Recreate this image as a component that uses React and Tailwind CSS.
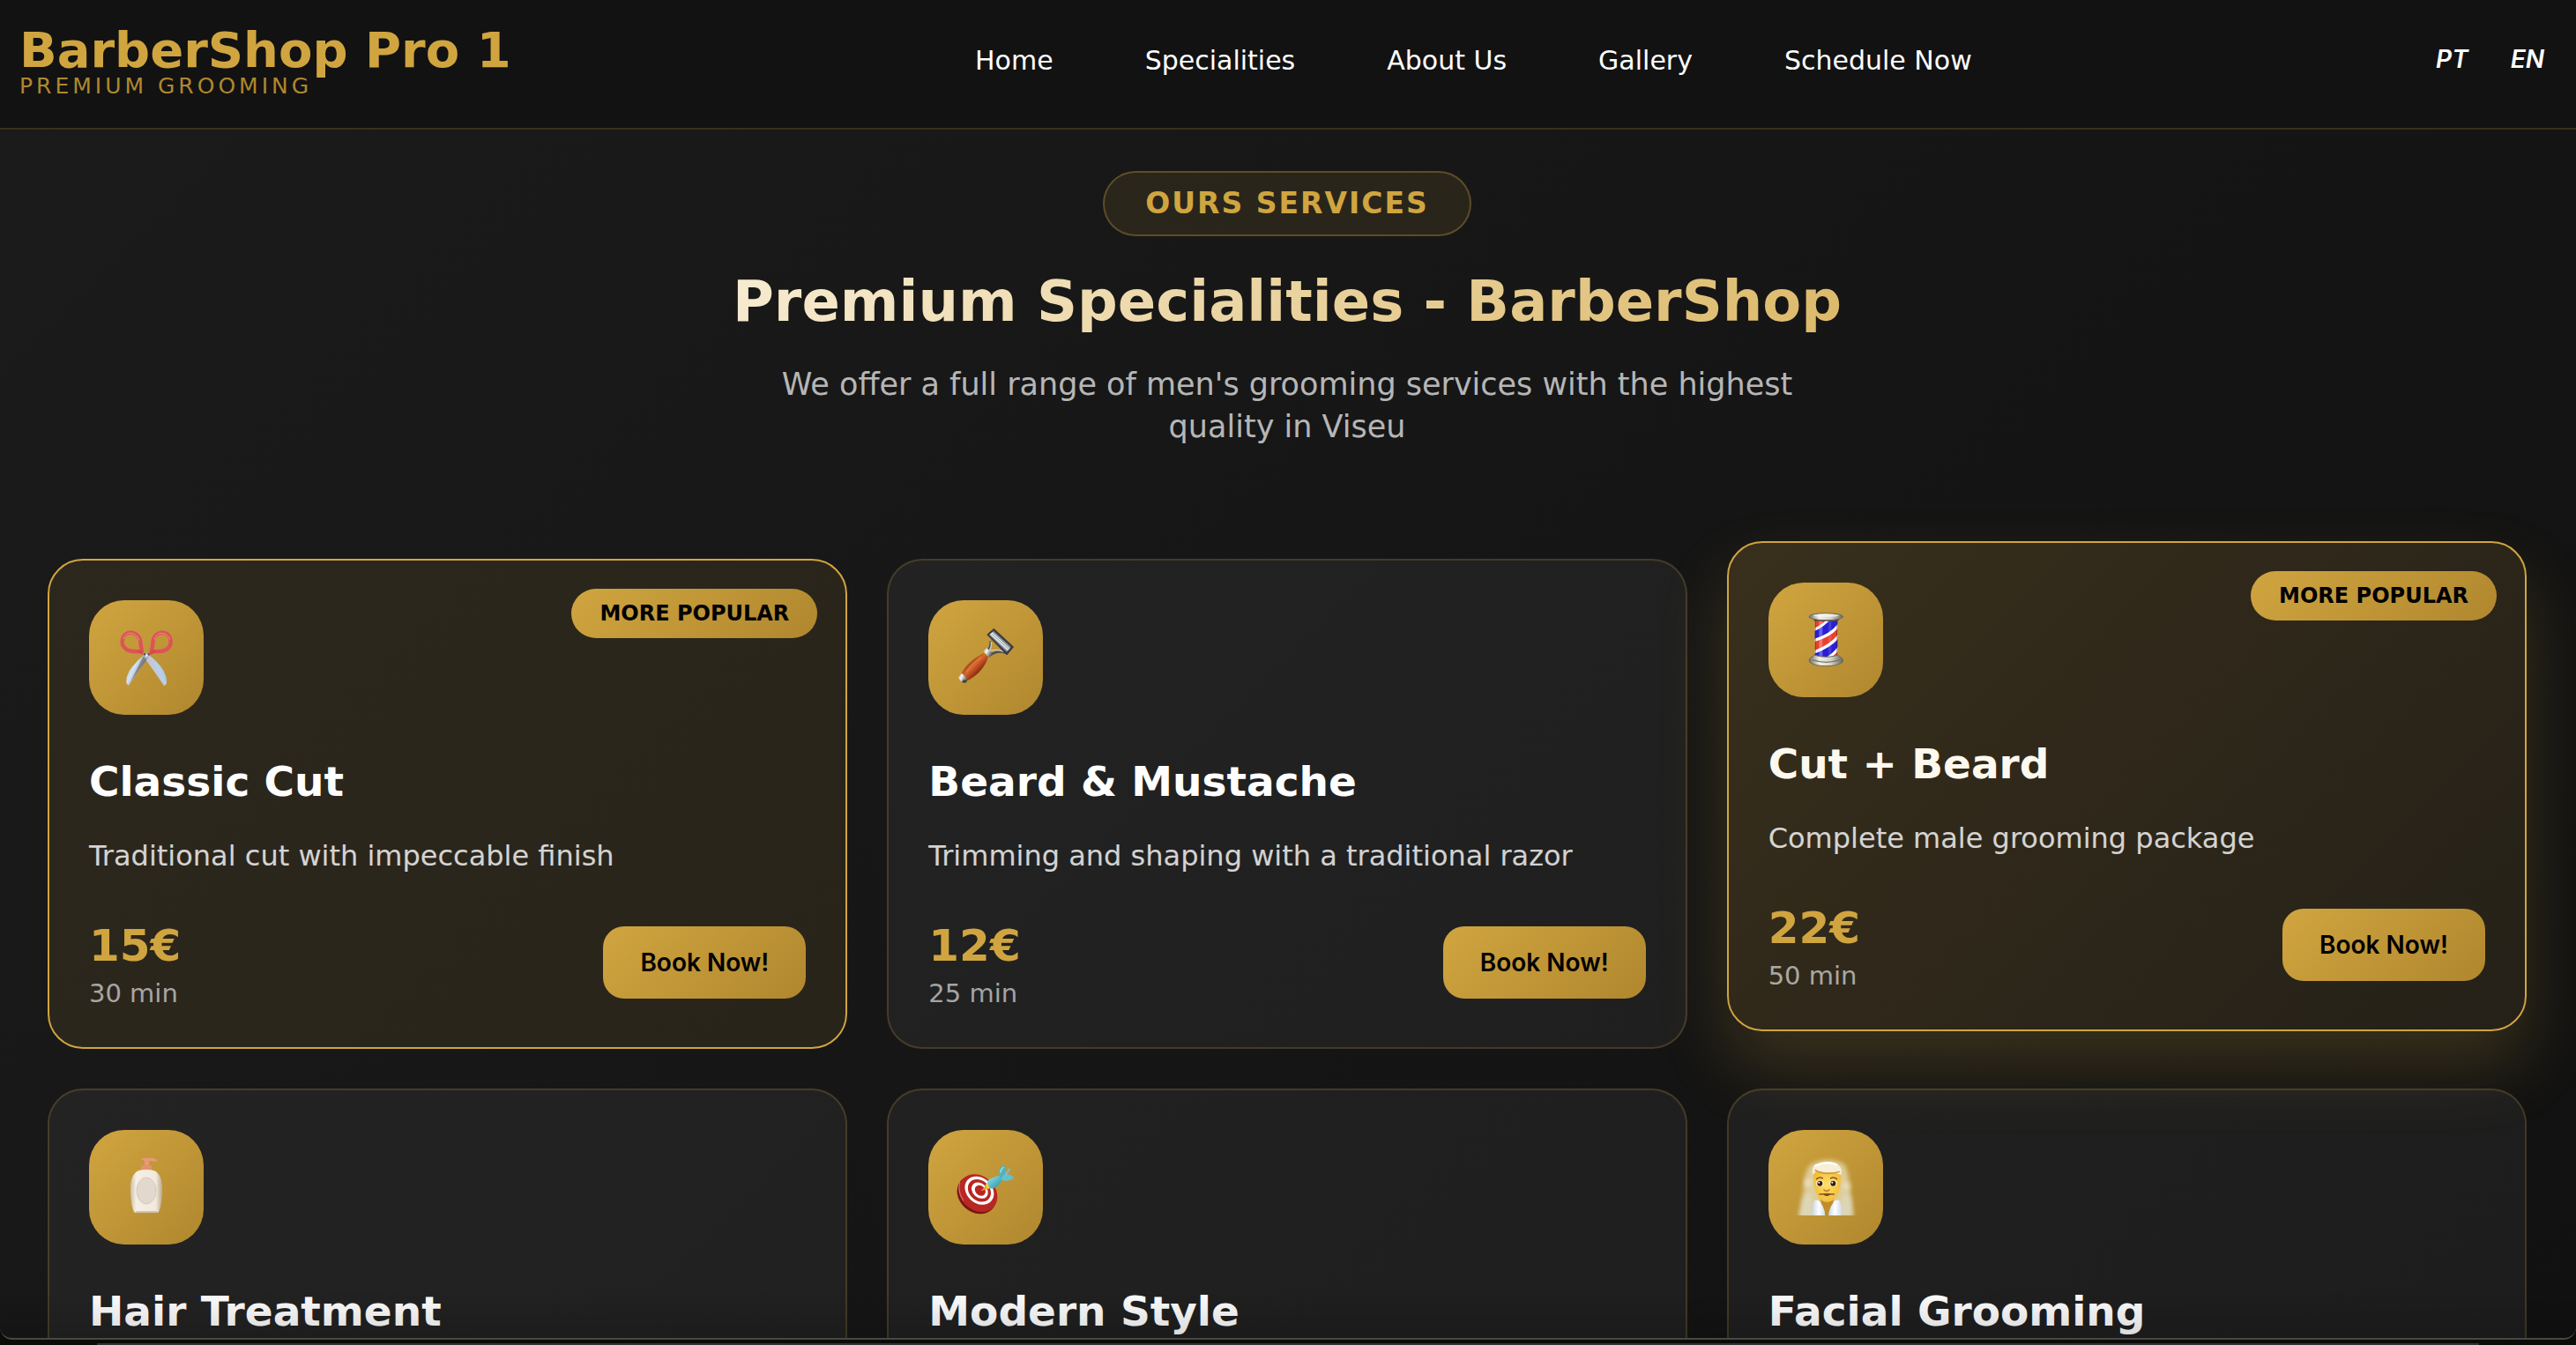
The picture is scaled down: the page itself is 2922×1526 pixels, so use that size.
const NAV = ["Home", "Specialities", "About Us", "Gallery", "Schedule Now"];

function ScissorsIcon() {
  return (
    <svg viewBox="33 33 390 390" className="size-full" aria-hidden="true">
      <defs>
        <linearGradient id="bladeL" x1="0" y1="0" x2="1" y2="0.7">
          <stop offset="0" stopColor="#9fb0c4" />
          <stop offset="0.45" stopColor="#d3e3f3" />
          <stop offset="0.7" stopColor="#8d8f98" />
          <stop offset="1" stopColor="#5d4b43" />
        </linearGradient>
        <linearGradient id="bladeR" x1="1" y1="0" x2="0" y2="0.6">
          <stop offset="0" stopColor="#8fa9c8" />
          <stop offset="0.45" stopColor="#b9d0ea" />
          <stop offset="0.75" stopColor="#c9c3c9" />
          <stop offset="1" stopColor="#8d6b62" />
        </linearGradient>
      </defs>
      <path d="M224 216 L236 228 Q204 268 167 324 L160 314 Q158 288 178 262 Q196 238 224 216Z" fill="url(#bladeL)" />
      <path d="M232 216 L222 230 Q250 268 289 325 L297 316 Q299 290 281 264 Q262 238 232 216Z" fill="url(#bladeR)" />
      <path d="M217 224 L236 226 L176 308Z" fill="#4c4a50" opacity="0.45" />
      <g fill="none" stroke="#de5258" strokeWidth="13" strokeLinejoin="round">
        <path d="M146 172 C148 150 162 142 178 143 C196 146 209 160 209 184 L213 208 L184 207 C162 206 144 192 146 172Z" />
        <path d="M311 172 C309 150 295 142 279 143 C262 146 249 160 250 184 L245 208 L274 207 C296 206 313 192 311 172Z" />
      </g>
      <path d="M204 200 L224 214 L214 218 L196 208Z M255 200 L234 214 L244 218 L262 208Z" fill="#d8484f" />
      <g fill="none" stroke="#f28d8d" strokeWidth="3" strokeLinecap="round">
        <path d="M150 164 C153 150 166 143 178 145 C190 147 199 155 204 168" />
        <path d="M256 166 C260 152 269 145 280 145 C294 146 305 154 308 166" />
      </g>
      <path d="M215 212 H241 L235 228 L228 233 L221 228Z" fill="#a9b6c4" />
      <circle cx="222" cy="217" r="4" fill="#5a5058" />
      <circle cx="236" cy="217" r="4" fill="#5a5058" />
      <circle cx="229" cy="221" r="4" fill="#eef5fb" />
    </svg>
  );
}

function RazorIcon() {
  return (
    <svg viewBox="39 33 390 390" className="size-full" aria-hidden="true">
      <defs>
        <linearGradient id="handle" x1="0.3" y1="0.3" x2="0.7" y2="0.7">
          <stop offset="0" stopColor="#98401a" />
          <stop offset="0.4" stopColor="#d9682c" />
          <stop offset="1" stopColor="#86200f" />
        </linearGradient>
        <linearGradient id="steel" x1="0" y1="0" x2="1" y2="0.5">
          <stop offset="0" stopColor="#8b8f92" />
          <stop offset="0.4" stopColor="#f5f7f8" />
          <stop offset="1" stopColor="#4b4b4d" />
        </linearGradient>
      </defs>
      <path d="M251 172 Q252 198 236 208 L250 220 Q274 202 301 212" fill="none" stroke="#4d4f50" strokeWidth="7" />
      <path d="M253 174 Q256 196 242 208 Q268 196 296 208" fill="none" stroke="#c9cccb" strokeWidth="4" />
      <path d="M239 150 L262 130 L329 192 L306 219Z" fill="#3b3e42" stroke="#2d2f33" strokeWidth="2" strokeLinejoin="round" />
      <path d="M246 151 L261 138 L320 192 L306 209Z" fill="#8f989f" />
      <path d="M249 149 L257 142 L316 197 L309 204Z" fill="#e7edf1" />
      <path d="M256 148 L312 199" stroke="#8c959d" strokeWidth="3" />
      <path d="M226 206 L237 196 L259 214 L247 228Z" fill="url(#steel)" />
      <path d="M151 284 C162 258 190 232 227 213 L243 226 C232 262 206 288 176 305Z" fill="url(#handle)" />
      <path d="M170 276 Q188 248 218 228" fill="none" stroke="#ee8c4c" strokeWidth="4" strokeLinecap="round" opacity="0.7" />
      <path d="M141 296 L152 281 L175 303 L165 314 L153 313Z" fill="url(#steel)" />
      <path d="M152 312 L166 314 L171 308 L160 303Z" fill="#4b3f30" />
    </svg>
  );
}

function PoleIcon() {
  return (
    <svg viewBox="30 33 390 390" className="size-full" aria-hidden="true">
      <defs>
        <clipPath id="tube"><rect x="188" y="158" width="77" height="134" /></clipPath>
        <linearGradient id="cap" x1="0" y1="0" x2="1" y2="0">
          <stop offset="0" stopColor="#6f6c63" />
          <stop offset="0.3" stopColor="#f3f1e6" />
          <stop offset="0.65" stopColor="#d5d2c6" />
          <stop offset="1" stopColor="#67645b" />
        </linearGradient>
      </defs>
      <g clipPath="url(#tube)">
        <rect x="188" y="158" width="77" height="134" fill="#e8402f" />
        <path d="M180 196 Q216 182 240 152 H275 V170 Q246 214 180 231Z" fill="#2a1fd6" />
        <path d="M180 272 Q246 250 275 207 V250 Q250 282 220 296 H180Z" fill="#2a1fd6" />
        <path d="M180 196 Q216 182 240 152" fill="none" stroke="#fff" strokeWidth="9" />
        <path d="M180 231 Q246 214 275 170" fill="none" stroke="#fff" strokeWidth="10" />
        <path d="M180 272 Q246 250 275 207" fill="none" stroke="#fff" strokeWidth="10" />
        <path d="M220 296 Q250 282 272 252" fill="none" stroke="#fff" strokeWidth="10" />
        <rect x="202" y="158" width="12" height="134" fill="#fff" opacity="0.3" />
        <rect x="234" y="158" width="10" height="134" fill="#fff" opacity="0.12" />
        <rect x="188" y="158" width="4" height="134" fill="#401020" opacity="0.35" />
        <rect x="261" y="158" width="4" height="134" fill="#401020" opacity="0.35" />
      </g>
      <path d="M178 154 H275 L266 164 H187Z" fill="#4f4c44" />
      <ellipse cx="226" cy="149" rx="58" ry="12" fill="url(#cap)" stroke="#6b6860" strokeWidth="3" />
      <ellipse cx="226" cy="145" rx="44" ry="5" fill="#fbfaf2" opacity="0.7" />
      <path d="M188 280 Q226 292 265 280 L280 290 Q286 296 282 304 Q264 317 226 317 Q188 317 170 304 Q166 296 172 290Z" fill="url(#cap)" stroke="#6b6860" strokeWidth="3" />
      <path d="M180 296 Q226 312 273 296" fill="none" stroke="#77746b" strokeWidth="4" />
    </svg>
  );
}

function LotionIcon() {
  return (
    <svg viewBox="0 0 130 130" className="size-full" aria-hidden="true">
      <defs>
        <linearGradient id="bottle" x1="0" y1="0" x2="1" y2="0">
          <stop offset="0" stopColor="#c9bda6" />
          <stop offset="0.18" stopColor="#f6efe3" />
          <stop offset="0.8" stopColor="#f1e9dc" />
          <stop offset="1" stopColor="#b9a98c" />
        </linearGradient>
      </defs>
      <path d="M59 33 Q62 31 67 32 L73 32 Q77 33 77 36 L68 35 V41 H63 V35Z" fill="#e79a78" />
      <rect x="59" y="40" width="12" height="7" rx="1" fill="#e58f6c" />
      <path d="M53 48 Q56 45 65 45 Q74 45 77 48 Q84 54 83 71 Q82 88 79 93 Q78 94 76 94 H54 Q52 94 51 93 Q48 88 47 71 Q46 54 53 48Z" fill="url(#bottle)" />
      <ellipse cx="65" cy="69" rx="11" ry="15" fill="#e3d8ce" stroke="#d6c9bc" strokeWidth="1" />
      <path d="M53 93 H77" stroke="#a9987c" strokeWidth="1" />
    </svg>
  );
}

function TargetIcon() {
  return (
    <svg viewBox="39 36 390 390" className="size-full" aria-hidden="true">
      <defs>
        <linearGradient id="dart" x1="0" y1="0" x2="1" y2="1">
          <stop offset="0" stopColor="#a6e6ee" />
          <stop offset="0.5" stopColor="#58bccb" />
          <stop offset="1" stopColor="#2f8494" />
        </linearGradient>
      </defs>
      <g transform="rotate(42 206 254)">
        <ellipse cx="206" cy="258" rx="72" ry="59" fill="#7c1512" />
        <ellipse cx="206" cy="250" rx="71" ry="58" fill="#b82723" />
      </g>
      <g transform="rotate(42 208 246)">
        <ellipse cx="209" cy="240" rx="54" ry="43" fill="#fff" />
        <ellipse cx="209" cy="240" rx="43" ry="34" fill="#b92622" />
        <ellipse cx="210" cy="239" rx="31" ry="24" fill="#fff" />
        <ellipse cx="211" cy="238" rx="20" ry="16" fill="#b92622" />
      </g>
      <path d="M146 214 Q138 246 158 276" fill="none" stroke="#e27a74" strokeWidth="4" strokeLinecap="round" opacity="0.8" />
      <path d="M218 244 L238 222 L250 234Z" fill="#e0a92b" />
      <path d="M233 222 L244 214 L254 230 L240 237Z" fill="#f3cf3c" />
      <path d="M240 216 Q240 206 252 202 Q268 194 284 190 L291 203 Q284 220 270 230 Q258 238 248 234Z" fill="url(#dart)" />
      <path d="M280 194 Q272 166 297 156 Q308 166 302 190 L290 204Z" fill="#4fb3c2" />
      <path d="M286 202 L302 188 Q326 186 330 202 Q312 212 292 208Z" fill="#5dc3d1" />
      <path d="M290 200 L314 166 L319 170 L302 196Z" fill="#8cb7be" />
      <path d="M284 182 Q286 168 296 162" fill="none" stroke="#9fdfe8" strokeWidth="4" />
    </svg>
  );
}

function SaunaIcon() {
  return (
    <svg viewBox="30 36 390 390" className="size-full" aria-hidden="true">
      <defs>
        <filter id="steam" x="-20%" y="-20%" width="140%" height="140%"><feGaussianBlur stdDeviation="8" /></filter>
        <clipPath id="bust"><rect x="120" y="120" width="220" height="207" /></clipPath>
        <radialGradient id="face" cx="0.5" cy="0.5" r="0.6">
          <stop offset="0" stopColor="#ffe06a" />
          <stop offset="1" stopColor="#efb834" />
        </radialGradient>
        <linearGradient id="towel" x1="0" y1="0" x2="1" y2="0">
          <stop offset="0" stopColor="#c6d6e8" />
          <stop offset="0.5" stopColor="#ffffff" />
          <stop offset="1" stopColor="#cfdbe8" />
        </linearGradient>
      </defs>
      <g clipPath="url(#bust)">
        <path d="M170 156 Q196 138 232 138 Q272 138 292 158 Q304 190 308 240 Q316 280 318 340 H134 Q140 280 150 240 Q148 190 170 156Z" fill="#e9dfba" opacity="0.75" filter="url(#steam)" />
        <path d="M146 280 Q158 244 178 250 L184 330 H134Z M284 250 Q306 244 312 284 L316 330 H268Z" fill="#dcdcc8" opacity="0.65" filter="url(#steam)" />
        <circle cx="164" cy="216" r="14" fill="#f1ead2" opacity="0.6" filter="url(#steam)" />
        <circle cx="296" cy="228" r="14" fill="#f1ead2" opacity="0.6" filter="url(#steam)" />
        <path d="M206 270 H252 L240 330 H222Z" fill="#c08d27" />
        <path d="M183 180 Q184 166 228 166 Q272 166 276 180 Q278 222 268 250 Q254 282 229 282 Q204 282 192 250 Q182 222 183 180Z" fill="url(#face)" />
        <path d="M182 190 Q172 158 200 150 Q232 138 262 152 Q284 162 277 190 Q262 180 240 182 Q206 184 192 176Z" fill="#f7efd6" />
        <path d="M188 172 Q220 192 272 178" fill="none" stroke="#c98d34" strokeWidth="4" />
        <path d="M190 158 Q226 140 262 154" fill="none" stroke="#fff" strokeWidth="7" strokeLinecap="round" />
        <path d="M194 203 Q202 195 214 200 M242 200 Q254 195 262 203" fill="none" stroke="#8b5420" strokeWidth="5" strokeLinecap="round" />
        <ellipse cx="205" cy="218" rx="13" ry="10" fill="#fff3d2" />
        <ellipse cx="250" cy="218" rx="13" ry="10" fill="#fff3d2" />
        <circle cx="205" cy="218" r="9" fill="#35200f" />
        <circle cx="250" cy="218" r="9" fill="#35200f" />
        <circle cx="202" cy="215" r="3" fill="#fff" />
        <circle cx="247" cy="215" r="3" fill="#fff" />
        <path d="M219 240 Q228 248 237 240" fill="none" stroke="#bd7b25" strokeWidth="5" strokeLinecap="round" />
        <path d="M204 255 Q228 252 253 255" fill="none" stroke="#8e5320" strokeWidth="4" strokeLinecap="round" />
        <path d="M216 256 Q228 266 242 256Z" fill="#5f3518" />
        <path d="M190 274 Q176 284 180 330 H223 Q222 296 200 276Z" fill="url(#towel)" />
        <path d="M268 274 Q282 284 278 330 H234 Q236 296 258 276Z" fill="url(#towel)" />
      </g>
    </svg>
  );
}

const SERVICES = [
  { title: "Classic Cut", text: "Traditional cut with impeccable finish", price: "15€", time: "30 min", Icon: ScissorsIcon, kind: "popular" },
  { title: "Beard & Mustache", text: "Trimming and shaping with a traditional razor", price: "12€", time: "25 min", Icon: RazorIcon, kind: "plain" },
  { title: "Cut + Beard", text: "Complete male grooming package", price: "22€", time: "50 min", Icon: PoleIcon, kind: "raised" },
  { title: "Hair Treatment", Icon: LotionIcon, kind: "plain" },
  { title: "Modern Style", Icon: TargetIcon, kind: "plain" },
  { title: "Facial Grooming", Icon: SaunaIcon, kind: "plain" },
];

const CARD_STYLES = {
  plain: "border-[#d4a843]/20 bg-white/5",
  popular: "border-[#d0a540] bg-[#d4a843]/10",
  raised:
    "border-[#d0a540] bg-linear-135 from-[#38301c] via-[#2e271a] to-[#252118] -translate-y-5 shadow-[0_40px_80px_rgba(212,168,67,0.2)]",
};

function ServiceCard({ title, text, price, time, Icon, kind }) {
  return (
    <article className={`relative min-h-[556px] rounded-[40px] border-2 p-[45px] ${CARD_STYLES[kind]}`}>
      {kind !== "plain" && (
        <span className="absolute top-8 right-8 rounded-full bg-linear-135 from-[#d0a540] to-[#b0872e] px-8 py-3 text-2xl leading-8 font-bold text-black">
          MORE POPULAR
        </span>
      )}
      <div className="size-[130px] rounded-[40px] bg-linear-135 from-[#d0a540] to-[#b0872e]">
        <Icon />
      </div>
      <h3 className={`mt-12 text-[47px] leading-14 font-bold ${kind === "raised" ? "text-[#fdf9ef]" : "text-white"}`}>{title}</h3>
      {text && <p className="mt-8 text-[32px] leading-12 text-white/80">{text}</p>}
      {price && (
        <div className="mt-[46px] flex items-center justify-between">
          <div>
            <p className="text-[50px] leading-16 font-bold text-[#d0a540]">{price}</p>
            <p className="mt-[6px] text-[29px] leading-8 text-white/60">{time}</p>
          </div>
          <button
            type="button"
            className="h-[82px] rounded-3xl bg-linear-135 from-[#d0a540] to-[#b0872e] px-[42px] font-['Inter',sans-serif] text-[28px] font-semibold text-black"
          >
            Book Now!
          </button>
        </div>
      )}
    </article>
  );
}

export default function App() {
  return (
    <div className="flex h-screen flex-col overflow-hidden bg-[#0b0b08] font-['DejaVu_Sans',sans-serif]">
      <div className="relative min-h-0 flex-1 overflow-hidden rounded-b-[14px] border-b-2 border-[#484848] bg-linear-135 from-[#1b1b1b] via-[#161616] to-[#111111]">
        <header className="flex items-center justify-between border-b-2 border-[#d4a843]/20 bg-[#121212] pt-7 pr-9 pb-[35px] pl-[22px]">
          <div>
            <p className="text-[56px] leading-[58px] font-bold text-[#d0a540]">BarberShop Pro 1</p>
            <p className="text-[25px] leading-6 tracking-[4px] text-[#b0872e]">PREMIUM GROOMING</p>
          </div>
          <nav className="flex gap-[104px]">
            {NAV.map((label) => (
              <a key={label} href="#" className="text-[30px] leading-9 text-white">{label}</a>
            ))}
          </nav>
          <div className="mb-1 flex gap-12 font-['Inter',sans-serif] text-[28px] leading-8 font-semibold text-white italic">
            <button type="button" className="italic">PT</button>
            <button type="button" className="italic">EN</button>
          </div>
        </header>

        <main className="pt-[47px] pr-14 pl-[54px]">
          <div className="flex flex-col items-center text-center">
            <span className="rounded-full border-2 border-[#d4a843]/30 bg-[#d4a843]/10 px-[46px] py-[15px] text-[33px] leading-10 font-bold tracking-[2px] text-[#d0a540]">
              OURS SERVICES
            </span>
            <h1 className="mt-9 bg-linear-135 from-[#f7ecd2] to-[#dcb968] bg-clip-text text-[64px] leading-[76px] font-bold text-transparent">
              Premium Specialities - BarberShop
            </h1>
            <p className="mt-8 max-w-[1200px] text-[35px] leading-12 text-white/70">
              We offer a full range of men's grooming services with the highest<br /> quality in Viseu
            </p>
          </div>
          <div className="mt-[126px] grid grid-cols-3 gap-[45px]">
            {SERVICES.map((s) => (
              <ServiceCard key={s.title} {...s} />
            ))}
          </div>
        </main>
        <div className="pointer-events-none absolute inset-x-0 bottom-0 h-14 bg-linear-to-b from-transparent to-black/15" />
      </div>
      <div className="h-[6px] px-[110px] pt-1">
        <div className="h-[2px] bg-[#333333]" />
      </div>
    </div>
  );
}
